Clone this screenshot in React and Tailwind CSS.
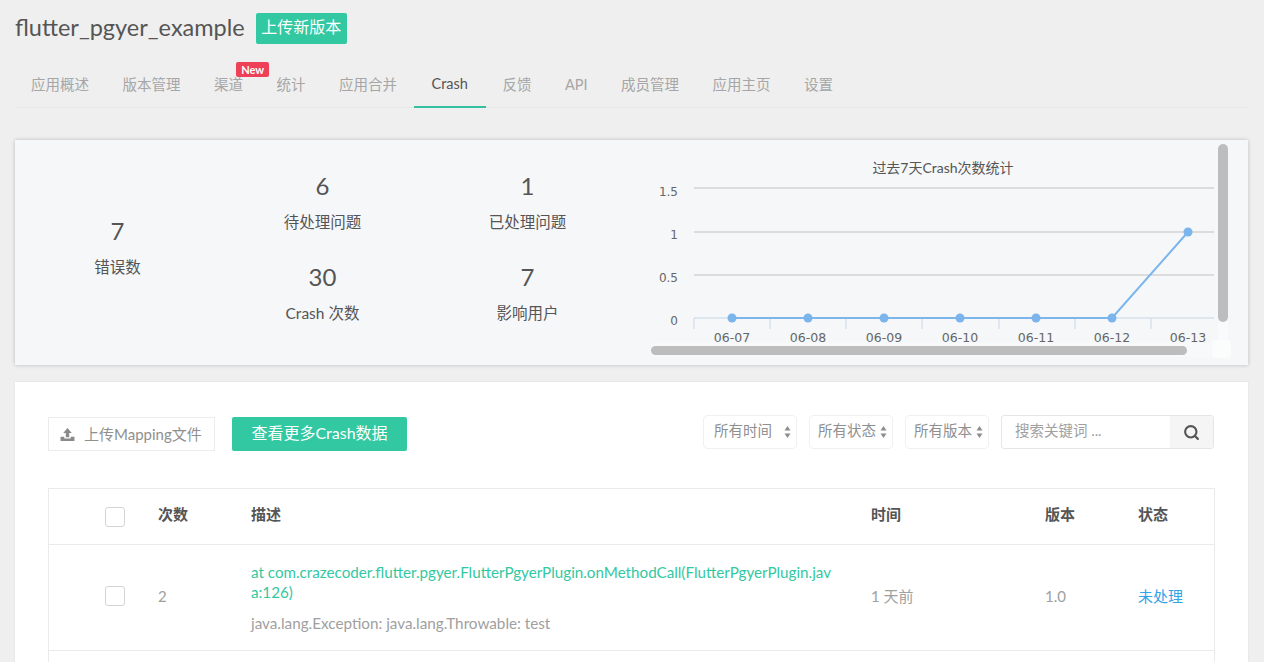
import { Search } from "lucide-react";

const font = "font-['Lato','Noto_Sans_CJK_SC',sans-serif]";

const tabs = ["应用概述", "版本管理", "渠道", "统计", "应用合并", "Crash", "反馈", "API", "成员管理", "应用主页", "设置"];
const xTicks = [694, 770, 846, 922, 999, 1075, 1151];
const points = [732, 808, 884, 960, 1036, 1112, 1188];
const labels = ["06-07", "06-08", "06-09", "06-10", "06-11", "06-12", "06-13"];
const axisFont = "'DejaVu Sans', sans-serif";

function Stat({ value, label }) {
  return (
    <div className="flex flex-col items-center">
      <div className="text-[24px] leading-[30px] text-[#555]">{value}</div>
      <div className="mt-[10px] text-[15.5px] leading-[22px] text-[#555]">{label}</div>
    </div>
  );
}

function Chart() {
  return (
    <svg width="596" height="224" viewBox="636 140 596 224" className="block">
      <text x="943" y="173" textAnchor="middle" fontSize="14" fill="#555">过去7天Crash次数统计</text>
      {[188, 232, 275].map((y) => (
        <line key={y} x1="694" x2="1214" y1={y} y2={y} stroke="#bfc1c3" strokeWidth="1.2" />
      ))}
      <line x1="694" x2="1214" y1="318" y2="318" stroke="#c4d6e6" />
      {xTicks.map((x) => (
        <line key={x} x1={x} x2={x} y1="318" y2="329" stroke="#ccd6eb" />
      ))}
      {[["1.5", 196], ["1", 239], ["0.5", 282], ["0", 325]].map(([t, y]) => (
        <text key={t} x="678" y={y} textAnchor="end" fontSize="12" fontFamily={axisFont} fill="#666">{t}</text>
      ))}
      {labels.map((t, i) => (
        <text key={t} x={points[i]} y="342" textAnchor="middle" fontSize="12.5" fontFamily={axisFont} fill="#666">{t}</text>
      ))}
      <polyline points="732,318 1112,318 1188,232" fill="none" stroke="#7cb5ec" strokeWidth="2" />
      {points.map((x, i) => (
        <circle key={x} cx={x} cy={i === 6 ? 232 : 318} r="4.5" fill="#7cb5ec" />
      ))}
    </svg>
  );
}

function UploadIcon() {
  return (
    <svg width="15" height="15" viewBox="0 0 14 14" fill="#8a8a8a">
      <path d="M7 1 L11 5.5 H8.6 V9.5 H5.4 V5.5 H3 Z" />
      <path d="M0.5 9 H4 V10.8 H10 V9 H13.5 V13 H0.5 Z" />
    </svg>
  );
}

function Carets() {
  return (
    <svg width="7" height="14" viewBox="0 0 7 14" fill="#8d8d8d">
      <path d="M3.5 1 L6.5 5.5 H0.5 Z" />
      <path d="M3.5 13 L6.5 8.5 H0.5 Z" />
    </svg>
  );
}

function Select({ label, width, pad, gap }) {
  return (
    <div className={`flex h-[34px] items-center rounded-[5px] border border-[#f0f0f0] bg-white text-[14.5px] text-[#8f8f8f] ${width} ${pad}`}>
      <span className="pb-[3px]">{label}</span>
      <span className={gap}><Carets /></span>
    </div>
  );
}

function Checkbox({ className = "" }) {
  return <div className={`h-[20px] w-[20px] rounded-[3px] border border-[#d4d4d4] bg-white ${className}`} />;
}

export default function App() {
  return (
    <div className={`h-[662px] overflow-hidden bg-[#efefef] pl-[15px] pr-[16px] ${font}`}>
      <header className="flex h-[57px] items-center pb-[1px]">
        <h1 className="text-[23.5px] font-normal text-[#555]">flutter_pgyer_example</h1>
        <button className="ml-[11px] flex h-[31px] w-[91px] items-center justify-center rounded-[2px] bg-[#32c8a2] pb-[2px] text-[16px] text-white">上传新版本</button>
      </header>

      <nav className="flex h-[51px] border-b border-[#e6e6e6]">
        {tabs.map((tab) => (
          <div
            key={tab}
            className={`relative flex h-[51px] items-center pt-[4px] text-[14.5px] first:pl-[16px] ${tab === "Crash" ? "w-[72px] justify-center border-b-2 border-[#32c0a0] text-[#555]" : "px-[16.75px] text-[#a6a6a6]"}`}
          >
            {tab}
            {tab === "渠道" && (
              <span className="absolute left-[39px] top-[5px] rounded-[2px] bg-[#ee4056] px-[5px] text-[11px] leading-[15px] font-bold text-white">New</span>
            )}
          </div>
        ))}
      </nav>

      <section className="mt-[32px] flex h-[225px] overflow-hidden bg-[#f5f7f9] shadow-[0_0_4px_rgba(0,0,0,0.22)]">
        <div className="flex w-[205px] flex-col items-center justify-center pb-[11px]">
          <Stat value="7" label="错误数" />
        </div>
        <div className="grid w-[410px] grid-cols-2 content-center gap-y-[29px] pb-[10px]">
          <Stat value="6" label="待处理问题" />
          <Stat value="1" label="已处理问题" />
          <Stat value="30" label="Crash 次数" />
          <Stat value="7" label="影响用户" />
        </div>
        <div className="relative ml-[6px] flex-1">
          <Chart />
          <div className="absolute left-[15px] top-[203px] h-[14px] w-[560px] bg-[#f8f9fa]" />
          <div className="absolute left-[15px] top-[206px] h-[9px] w-[536px] rounded-full bg-[#bdbdbd]" />
          <div className="absolute left-[582px] top-[182px] h-[20px] w-[10px] bg-[#f9fafb]" />
          <div className="absolute left-[576px] top-[200px] h-[18px] w-[19px] rounded-[3px] bg-[#fbfcfc]" />
          <div className="absolute left-[582px] top-[4px] h-[178px] w-[10px] rounded-full bg-[#bdbdbd]" />
        </div>
      </section>

      <section className="mt-[17px] h-[400px] bg-white px-[33px] pt-[33px] shadow-[0_0_2px_rgba(0,0,0,0.08)]">
        <div className="flex items-start">
          <button className="mt-[2px] flex h-[34px] w-[167px] items-center gap-[9px] border border-[#ececec] bg-white pl-[11px] text-[15px] text-[#8f8f8f]">
            <UploadIcon />
            上传Mapping文件
          </button>
          <button className="mt-[2px] ml-[17px] h-[34px] w-[175px] rounded-[2px] bg-[#32c8a2] pb-[2px] text-[16px] text-white">查看更多Crash数据</button>
          <div className="mr-[1px] ml-auto flex gap-[12px]">
            <Select label="所有时间" width="w-[94px]" pad="pl-[10px]" gap="ml-[12px]" />
            <Select label="所有状态" width="w-[84px]" pad="pl-[8px]" gap="ml-[4px]" />
            <Select label="所有版本" width="w-[84px]" pad="pl-[8px]" gap="ml-[4px]" />
            <div className="flex h-[34px] w-[213px] overflow-hidden rounded-[3px] border border-[#e6e6e6] bg-white">
              <div className="flex flex-1 items-center pb-[3px] pl-[13px] text-[14.5px] text-[#a0a0a0]">搜索关键词 ...</div>
              <div className="flex w-[43px] items-center justify-center bg-[#f5f5f5]">
                <Search size={17} strokeWidth={3} className="text-[#555]" />
              </div>
            </div>
          </div>
        </div>

        <div className="mt-[37px] border border-[#eaeaea] text-[15px]">
          <div className="grid h-[56px] grid-cols-[56px_53px_93px_620px_174px_93px_1fr] items-center border-b border-[#eaeaea] font-bold text-[#555]">
            <div />
            <Checkbox />
            <div className="pb-[5px]">次数</div>
            <div className="pb-[5px]">描述</div>
            <div className="pb-[5px]">时间</div>
            <div className="pb-[5px]">版本</div>
            <div className="pb-[5px]">状态</div>
          </div>
          <div className="grid h-[106px] grid-cols-[56px_53px_93px_620px_174px_93px_1fr] items-center border-b border-[#eaeaea] text-[#a0a0a0]">
            <div />
            <Checkbox className="mb-[4px]" />
            <div className="pb-[3px]">2</div>
            <div className="w-[585px]">
              <div className="break-all text-[15.2px] leading-[20px] text-[#32c8a2]">at com.crazecoder.flutter.pgyer.FlutterPgyerPlugin.onMethodCall(FlutterPgyerPlugin.java:126)</div>
              <div className="mt-[11px] text-[15.25px] leading-[20px] text-[#a0a0a0]">java.lang.Exception: java.lang.Throwable: test</div>
            </div>
            <div className="pb-[3px]">1 天前</div>
            <div className="pb-[3px]">1.0</div>
            <div className="pb-[3px] text-[#2fa4e7]">未处理</div>
          </div>
          <div className="h-[100px]" />
        </div>
      </section>
    </div>
  );
}
